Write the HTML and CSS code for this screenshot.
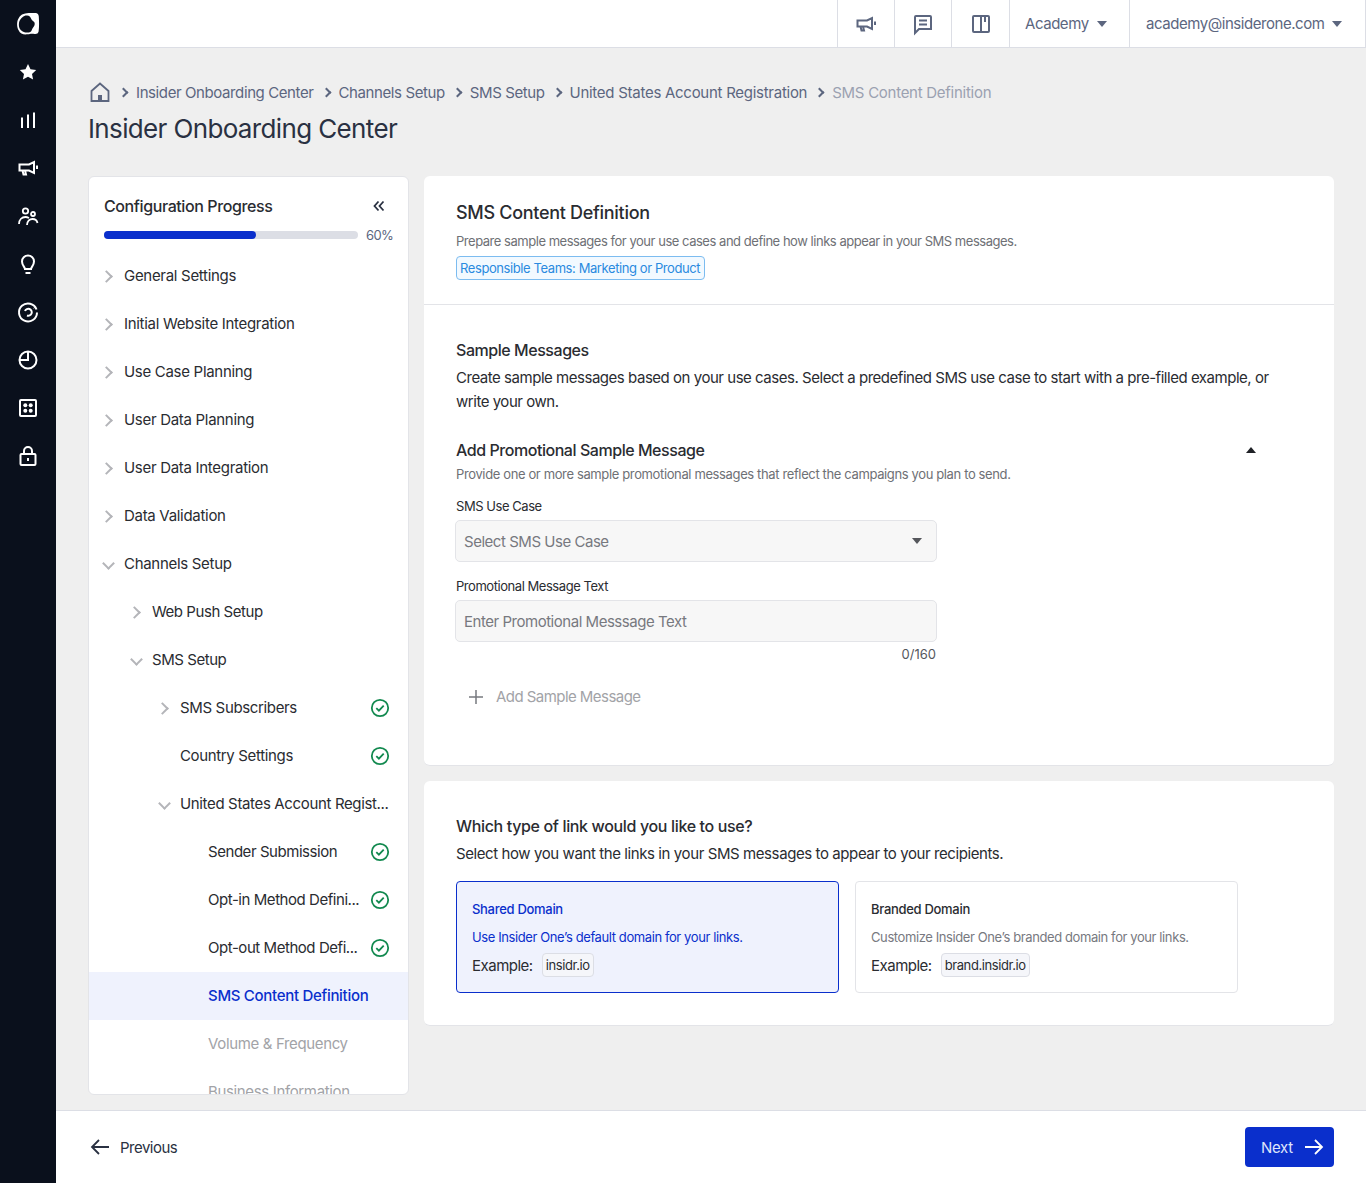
FILE: index.html
```html
<!DOCTYPE html>
<html lang="en">
<head>
    <meta charset="UTF-8">
    <title>Insider Onboarding Center</title>
    <link rel="stylesheet" href="styles.css">
</head>
<body>
    <nav class="rail">
        <svg class="rail-logo" viewBox="0 0 24 24"><path fill="#fff" d="M6 2.5C10 .6 15 1.2 20 1c2 .4 2.600 1.600 2.800 3.500.3 5 .5 10-.2 15-.4 2-2 2.600-4 2.400-3-.5-4.300-.2-7 .4-4 .6-7.500-.5-9-4C.6 15 .8 10 2 7.500 3 5.300 4.300 3.600 6 2.500z"/><path fill="#0a101c" d="M11 3.500c2.500.2 3.500 1.500 4 3 .8 2.200 2.500 2.500 3.500 4 .8 2-.5 4-1.700 5.500-1 1.500-1 3-2.500 4-3 1.200-7 .5-9.300-1.700C2.500 16 2.500 11.500 3.500 9 5 5.800 8 3.200 11 3.500z"/></svg>
        <svg class="rail-icon" viewBox="0 0 24 24"><path fill="#fff" d="M12 4l2.500 5.300 5.700.7-4.200 3.900 1.100 5.700-5.100-2.800-5.100 2.800 1.100-5.700L3.800 10l5.700-.7z"/></svg>
        <svg class="rail-icon" viewBox="0 0 24 24"><path d="M6 9.500V20M12 6.500V20M18 4.500V20" fill="none" stroke="#fff" stroke-width="2"/></svg>
        <svg class="rail-icon" viewBox="0 0 24 24"><path d="M3.500 8.500h9.500l5-2.500v11l-5-2.500H3.500zM6.500 14.500l1 4h2.500l-1-4M21 9.500v3.500" fill="none" stroke="#fff" stroke-width="2"/></svg>
        <svg class="rail-icon" viewBox="0 0 24 24"><circle cx="9.500" cy="7" r="2.700" fill="none" stroke="#fff" stroke-width="1.800"/><circle cx="17" cy="10" r="2" fill="none" stroke="#fff" stroke-width="1.800"/><path d="M3 20c0-4.500 3-7 6.500-7 1.500 0 2.500.5 3.500 1M11 21c0-3.500 2.500-6 5.500-6 2.500 0 4.500 1.500 5 4" fill="none" stroke="#fff" stroke-width="1.800"/></svg>
        <svg class="rail-icon" viewBox="0 0 24 24"><path d="M9 17c0-2-3-3.500-3-7.500a6 6 0 0 1 12 0c0 4-3 5.500-3 7.500zM9.500 21h5" fill="none" stroke="#fff" stroke-width="2"/></svg>
        <svg class="rail-icon" viewBox="0 0 24 24"><path d="M20.500 9.500a9 9 0 1 0 .5 3M9 11a3.500 3.500 0 1 1 2 4.500M18 7.500l.5.500" fill="none" stroke="#fff" stroke-width="2"/></svg>
        <svg class="rail-icon" viewBox="0 0 24 24"><circle cx="12" cy="12" r="8.500" fill="none" stroke="#fff" stroke-width="2"/><path d="M12 3.500V12H3.500" fill="none" stroke="#fff" stroke-width="2"/></svg>
        <svg class="rail-icon" viewBox="0 0 24 24"><rect x="4" y="4" width="16" height="16" rx="1" fill="none" stroke="#fff" stroke-width="2"/><circle cx="9.300" cy="9.300" r="2" fill="#fff"/><circle cx="14.700" cy="9.300" r="2" fill="#fff"/><circle cx="9.300" cy="14.700" r="2" fill="#fff"/><circle cx="14.700" cy="14.700" r="2" fill="#fff"/></svg>
        <svg class="rail-icon" viewBox="0 0 24 24"><rect x="4.500" y="10" width="15" height="11" rx="1" fill="none" stroke="#fff" stroke-width="2"/><path d="M8 10V7a4 4 0 0 1 8 0v3M12 14v3" fill="none" stroke="#fff" stroke-width="2"/></svg>
    </nav>

    <div class="page">
        <header class="topbar">
            <div class="top-cell top-icon">
                <svg width="24" height="24" viewBox="0 0 24 24"><path d="M3.500 8.500h9.500l5-2.500v11l-5-2.500H3.500zM6.500 14.500l1 4h2.500l-1-4M21 9.500v3.500" fill="none" stroke="#5c667f" stroke-width="2"/></svg>
            </div>
            <div class="top-cell top-icon">
                <svg width="24" height="24" viewBox="0 0 24 24"><path d="M4 5a1 1 0 0 1 1-1h14a1 1 0 0 1 1 1v12H8l-4 4zM8 8.500h8M8 12.500h8" fill="none" stroke="#5c667f" stroke-width="2"/></svg>
            </div>
            <div class="top-cell top-icon top-book">
                <svg width="24" height="24" viewBox="0 0 24 24"><path d="M4 5a1 1 0 0 1 1-1h14a1 1 0 0 1 1 1v14a1 1 0 0 1-1 1H5a1 1 0 0 1-1-1zM12 4v16M16 4v6" fill="none" stroke="#5c667f" stroke-width="2"/></svg>
            </div>
            <div class="top-cell top-menu top-academy">Academy <span class="caret"></span></div>
            <div class="top-cell top-menu top-user">academy@insiderone.com <span class="caret"></span></div>
        </header>

        <main class="content">
            <div class="breadcrumb">
                <svg class="home" width="24" height="24" viewBox="0 0 24 24"><path d="M3.500 11L12 3.500 20.500 11v10h-17z" fill="none" stroke="#5c667f" stroke-width="1.800"/><rect x="10" y="15" width="4" height="6" fill="#5c667f"/></svg>
                <span class="crumb-sep"></span><a class="crumb-tight">Insider Onboarding Center</a>
                <span class="crumb-sep"></span><a class="crumb-tight">Channels Setup</a>
                <span class="crumb-sep"></span><a class="crumb-tight">SMS Setup</a>
                <span class="crumb-sep"></span><a>United States Account Registration</a>
                <span class="crumb-sep"></span><a class="crumb-current">SMS Content Definition</a>
            </div>
            <h1>Insider Onboarding Center</h1>

            <div class="columns">
                <aside class="progress-card">
                    <div class="progress-head">
                        <h3>Configuration Progress</h3>
                        <svg width="14" height="14" viewBox="0 0 14 14"><path d="M6.500 2.500L2.500 7l4 4.500M11.500 2.500L7.500 7l4 4.500" fill="none" stroke="#2a3142" stroke-width="1.800"/></svg>
                    </div>
                    <div class="progress-row">
                        <div class="progress-track"><div class="progress-fill" style="width: 60%"></div></div>
                        <span>60%</span>
                    </div>
                    <ul class="tree">
                        <li class="tree-item"><span class="arrow"></span>General Settings</li>
                        <li class="tree-item"><span class="arrow"></span>Initial Website Integration</li>
                        <li class="tree-item"><span class="arrow"></span>Use Case Planning</li>
                        <li class="tree-item"><span class="arrow"></span>User Data Planning</li>
                        <li class="tree-item"><span class="arrow"></span>User Data Integration</li>
                        <li class="tree-item"><span class="arrow"></span>Data Validation</li>
                        <li class="tree-item"><span class="arrow open"></span>Channels Setup</li>
                        <li class="tree-item level-1"><span class="arrow"></span>Web Push Setup</li>
                        <li class="tree-item level-1"><span class="arrow open"></span>SMS Setup</li>
                        <li class="tree-item level-2"><span class="arrow"></span><span class="tree-text">SMS Subscribers</span><svg class="check" viewBox="0 0 20 20"><circle cx="10" cy="10" r="8.200"/><path d="M6.300 10.200l2.600 2.500 4.800-5"/></svg></li>
                        <li class="tree-item level-2"><span class="arrow none"></span><span class="tree-text">Country Settings</span><svg class="check" viewBox="0 0 20 20"><circle cx="10" cy="10" r="8.200"/><path d="M6.300 10.200l2.600 2.500 4.800-5"/></svg></li>
                        <li class="tree-item level-2"><span class="arrow open"></span><span class="tree-text">United States Account Regist...</span></li>
                        <li class="tree-item level-3"><span class="tree-text">Sender Submission</span><svg class="check" viewBox="0 0 20 20"><circle cx="10" cy="10" r="8.200"/><path d="M6.300 10.200l2.600 2.500 4.800-5"/></svg></li>
                        <li class="tree-item level-3"><span class="tree-text">Opt-in Method Defini...</span><svg class="check" viewBox="0 0 20 20"><circle cx="10" cy="10" r="8.200"/><path d="M6.300 10.200l2.600 2.500 4.800-5"/></svg></li>
                        <li class="tree-item level-3"><span class="tree-text">Opt-out Method Defi...</span><svg class="check" viewBox="0 0 20 20"><circle cx="10" cy="10" r="8.200"/><path d="M6.300 10.200l2.600 2.500 4.800-5"/></svg></li>
                        <li class="tree-item level-3 active"><span class="tree-text">SMS Content Definition</span></li>
                        <li class="tree-item level-3 disabled"><span class="tree-text">Volume &amp; Frequency</span></li>
                        <li class="tree-item level-3 disabled"><span class="tree-text">Business Information</span></li>
                    </ul>
                </aside>

                <section class="panels">
                    <div class="panel">
                        <div class="panel-head">
                            <h2>SMS Content Definition</h2>
                            <p class="small-note">Prepare sample messages for your use cases and define how links appear in your SMS messages.</p>
                            <span class="team-tag">Responsible Teams: Marketing or Product</span>
                        </div>
                        <div class="panel-body">
                            <h3>Sample Messages</h3>
                            <p class="lead">Create sample messages based on your use cases. Select a predefined SMS use case to start with a pre-filled example, or write your own.</p>
                            <div class="accordion-head">
                                <h3>Add Promotional Sample Message</h3>
                                <span class="caret-up"></span>
                            </div>
                            <p class="small-note accordion-note">Provide one or more sample promotional messages that reflect the campaigns you plan to send.</p>
                            <label class="field-label">SMS Use Case</label>
                            <div class="field">Select SMS Use Case <span class="caret dark"></span></div>
                            <label class="field-label second">Promotional Message Text</label>
                            <div class="field">Enter Promotional Messsage Text</div>
                            <div class="counter">0/160</div>
                            <div class="add-row">
                                <svg width="16" height="16" viewBox="0 0 16 16"><path d="M8 1v14M1 8h14" fill="none" stroke="#77797f" stroke-width="1.500"/></svg>
                                Add Sample Message
                            </div>
                        </div>
                    </div>

                    <div class="panel panel-link">
                        <h3>Which type of link would you like to use?</h3>
                        <p class="lead">Select how you want the links in your SMS messages to appear to your recipients.</p>
                        <div class="link-options">
                            <div class="link-card selected">
                                <h4>Shared Domain</h4>
                                <p>Use Insider One’s default domain for your links.</p>
                                <div class="example">Example: <code>insidr.io</code></div>
                            </div>
                            <div class="link-card">
                                <h4>Branded Domain</h4>
                                <p>Customize Insider One’s branded domain for your links.</p>
                                <div class="example">Example: <code>brand.insidr.io</code></div>
                            </div>
                        </div>
                    </div>
                </section>
            </div>
        </main>

        <footer class="footer">
            <div class="prev-btn">
                <svg width="20" height="20" viewBox="0 0 20 20"><path d="M19 10H2M9 3l-7 7 7 7" fill="none" stroke="#2a3142" stroke-width="1.800"/></svg>
                Previous
            </div>
            <button class="next-btn">Next
                <svg width="20" height="20" viewBox="0 0 20 20"><path d="M1 10h17M11 3l7 7-7 7" fill="none" stroke="#fff" stroke-width="1.800"/></svg>
            </button>
        </footer>
    </div>
</body>
</html>
```

FILE: styles.css
```css
* {
    box-sizing: border-box;
}
body {
    margin: 0;
    height: 1183px;
    display: flex;
    overflow: hidden;
    font-family: Inter, sans-serif;
    font-size: 15px;
    letter-spacing: -0.3px;
    color: #2a2c31;
    background-color: #efefef;
}
h1, h2, h3, h4, p, ul {
    margin: 0;
    padding: 0;
}

/* left rail */
.rail {
    width: 56px;
    flex-shrink: 0;
    background-color: #0a101c;
    display: flex;
    flex-direction: column;
    align-items: center;
    padding-top: 12px;
    gap: 24px;
}
.rail-icon, .rail-logo {
    width: 24px;
    height: 24px;
}

/* top bar */
.page {
    flex: 1;
    min-width: 0;
    display: flex;
    flex-direction: column;
}
.topbar {
    height: 48px;
    flex-shrink: 0;
    display: flex;
    justify-content: flex-end;
    background-color: #fff;
    border-bottom: 1px solid #dcdee5;
    color: #5c667f;
    letter-spacing: -0.45px;
}
.top-cell {
    display: flex;
    align-items: center;
    justify-content: center;
    border-left: 1px solid #dcdee5;
}
.top-icon {
    width: 57px;
    height: 47px;
}
.top-book {
    width: 58px;
}
.top-menu {
    justify-content: flex-start;
    padding-left: 15px;
    gap: 8px;
    height: 47px;
}
.top-academy {
    width: 120px;
}
.top-user {
    width: 237px;
    padding-left: 16px;
    border-right: 1px solid #dcdee5;
}
.caret {
    display: inline-block;
    width: 0;
    height: 0;
    border-left: 5.5px solid transparent;
    border-right: 5.5px solid transparent;
    border-top: 6px solid #5c667f;
}
.caret.dark {
    border-top-color: #55575c;
}
.caret-up {
    width: 0;
    height: 0;
    border-left: 5.5px solid transparent;
    border-right: 5.5px solid transparent;
    border-bottom: 6px solid #1f2126;
}

/* heading area */
.content {
    flex: 1;
    min-height: 0;
    padding: 32px 32px 16px;
    display: flex;
    flex-direction: column;
}
.breadcrumb {
    height: 24px;
    display: flex;
    align-items: center;
    color: #5c667f;
}
.home {
    margin-right: 8px;
}
.crumb-sep {
    width: 7px;
    height: 7px;
    border-top: 2px solid #5c667f;
    border-right: 2px solid #5c667f;
    transform: rotate(45deg);
    margin-right: 9px;
}
.breadcrumb a {
    margin-right: 9px;
    letter-spacing: -0.27px;
}
.breadcrumb a.crumb-tight {
    letter-spacing: -0.4px;
}
.crumb-current {
    color: #9ba1b1;
}
h1 {
    margin-top: 9px;
    font-size: 26px;
    font-weight: 400;
    line-height: 32px;
    color: #2a3142;
    letter-spacing: -0.64px;
}

/* columns */
.columns {
    margin-top: 31px;
    flex: 1;
    min-height: 0;
    display: flex;
    gap: 15px;
    align-items: flex-start;
}
.progress-card {
    width: 321px;
    height: 919px;
    flex-shrink: 0;
    background-color: #fff;
    border: 1px solid #e3e4e8;
    border-radius: 6px;
    overflow: hidden;
}
.progress-head {
    display: flex;
    justify-content: space-between;
    align-items: center;
    padding: 17px 22px 0 15px;
    height: 41px;
    letter-spacing: -0.4px;
}
h3 {
    font-size: 16px;
    font-weight: 500;
    line-height: 22px;
}
.progress-row {
    display: flex;
    align-items: center;
    gap: 8px;
    padding-left: 15px;
    height: 22px;
    margin-top: 6px;
    font-size: 13px;
    color: #5c667f;
    letter-spacing: -0.6px;
}
.progress-track {
    width: 254px;
    height: 8px;
    flex-shrink: 0;
    border-radius: 4px;
    background-color: #dcdee5;
}
.progress-fill {
    height: 8px;
    border-radius: 4px;
    background-color: #0a2fcc;
}

/* tree */
.tree {
    list-style: none;
    margin-top: 6px;
}
.tree-item {
    height: 48px;
    display: flex;
    align-items: center;
    padding: 0 18px 2px 15px;
}
.level-1 {
    padding-left: 43px;
    letter-spacing: -0.45px;
}
.level-2 {
    padding-left: 71px;
    letter-spacing: -0.35px;
}
.level-3 {
    padding-left: 119px;
    letter-spacing: -0.45px;
}
.arrow {
    width: 20px;
    flex-shrink: 0;
    position: relative;
}
.arrow::before {
    content: "";
    position: absolute;
    left: -2px;
    top: -3px;
    width: 7px;
    height: 7px;
    border-top: 2px solid #b4b5b9;
    border-right: 2px solid #b4b5b9;
    transform: rotate(45deg);
}
.arrow.open::before {
    transform: rotate(135deg);
    left: 0;
    top: -4px;
}
.arrow.none::before {
    display: none;
}
.tree-text {
    flex: 1;
    min-width: 0;
    white-space: nowrap;
}
.check {
    width: 20px;
    height: 20px;
    flex-shrink: 0;
    margin: 2px 0 0 8px;
    fill: none;
    stroke: #12894f;
    stroke-width: 1.8;
}
.active {
    background-color: #eff2fd;
    color: #0a2fcc;
    font-weight: 500;
    letter-spacing: -0.3px;
}
.disabled {
    color: #a2a3a7;
    letter-spacing: -0.35px;
}

/* right side */
.panels {
    flex: 1;
    min-width: 0;
    display: flex;
    flex-direction: column;
    gap: 15px;
}
.panel {
    background-color: #fff;
    border-radius: 6px;
    border-bottom: 1px solid #e3e4e8;
}
.panel-head {
    height: 129px;
    padding: 25px 32px 0;
    border-bottom: 1px solid #e3e4e8;
}
h2 {
    font-size: 18px;
    font-weight: 500;
    line-height: 24px;
}
.small-note {
    font-size: 13px;
    color: #6e7075;
    line-height: 18px;
    margin-top: 7px;
    letter-spacing: -0.47px;
}
.team-tag {
    display: inline-block;
    margin-top: 6px;
    height: 24px;
    line-height: 22px;
    padding: 0 4px 0 3px;
    font-size: 13px;
    letter-spacing: -0.41px;
    color: #2a8ae0;
    background-color: #f2f9ff;
    border: 1px solid #7cbcf0;
    border-radius: 4px;
}
.panel-body {
    height: 460px;
    padding: 34px 32px 0;
}
.panel-body h3 {
    letter-spacing: -0.45px;
}
.lead {
    margin-top: 5px;
    line-height: 24px;
    max-width: 830px;
    letter-spacing: -0.47px;
}
.accordion-head {
    margin-top: 25px;
    padding-right: 46px;
    display: flex;
    justify-content: space-between;
    align-items: center;
}
.accordion-note {
    margin-top: 4px;
    letter-spacing: -0.37px;
}
.field-label {
    display: block;
    margin-top: 14px;
    font-size: 13px;
    line-height: 18px;
    letter-spacing: -0.45px;
}
.field-label.second {
    margin-top: 15px;
}
.field {
    width: 482px;
    height: 42px;
    margin: 5px 0 0 -1px;
    padding: 0 14px 0 8px;
    display: flex;
    align-items: center;
    justify-content: space-between;
    color: #77797f;
    background-color: #f7f7f7;
    border: 1px solid #e3e4e8;
    border-radius: 5px;
    letter-spacing: -0.47px;
}
.counter {
    width: 480px;
    text-align: right;
    font-size: 13px;
    line-height: 18px;
    margin-top: 3px;
    color: #55575c;
    letter-spacing: 0;
}
.add-row {
    margin: 24px 0 0 12px;
    display: flex;
    align-items: center;
    gap: 12px;
    color: #a2a3a7;
    letter-spacing: -0.55px;
}
.panel-link {
    height: 245px;
    padding: 34px 32px 0;
}
.panel-link h3 {
    letter-spacing: -0.35px;
}
.panel-link .lead {
    letter-spacing: -0.41px;
}
.link-options {
    display: flex;
    gap: 16px;
    margin-top: 15px;
}
.link-card {
    width: 383px;
    height: 112px;
    padding: 18px 15px 0;
    border: 1px solid #e3e4e8;
    border-radius: 4px;
    font-size: 13px;
    color: #77797f;
}
.link-card h4 {
    font-size: 13px;
    font-weight: 500;
    line-height: 18px;
    color: #2a2c31;
}
.link-card p {
    margin-top: 10px;
    line-height: 18px;
    letter-spacing: -0.4px;
}
.link-card.selected {
    background-color: #eff2fd;
    border-color: #0a2fcc;
    color: #0a2fcc;
}
.link-card.selected h4 {
    color: #0a2fcc;
}
.example {
    margin-top: 7px;
    font-size: 15px;
    letter-spacing: -0.5px;
    color: #2a2c31;
    display: flex;
    align-items: center;
    gap: 9px;
}
code {
    font-family: Inter, sans-serif;
    font-size: 13px;
    letter-spacing: -0.4px;
    height: 24px;
    line-height: 22px;
    padding: 0 3px;
    background-color: #f5f6fa;
    border: 1px solid #dcdee5;
    border-radius: 4px;
}

/* footer */
.footer {
    height: 73px;
    flex-shrink: 0;
    display: flex;
    justify-content: space-between;
    align-items: center;
    padding: 0 32px;
    background-color: #fff;
    border-top: 1px solid #dcdee5;
}
.prev-btn {
    display: flex;
    align-items: center;
    gap: 10px;
    padding-left: 2px;
    color: #2a3142;
    letter-spacing: -0.5px;
}
.next-btn {
    display: flex;
    align-items: center;
    gap: 11px;
    height: 40px;
    width: 89px;
    padding: 0 0 0 16px;
    background-color: #0a2fcc;
    border: none;
    border-radius: 4px;
    color: #dfe4fb;
    font-family: Inter, sans-serif;
    font-size: 15px;
    letter-spacing: -0.3px;
}
```
